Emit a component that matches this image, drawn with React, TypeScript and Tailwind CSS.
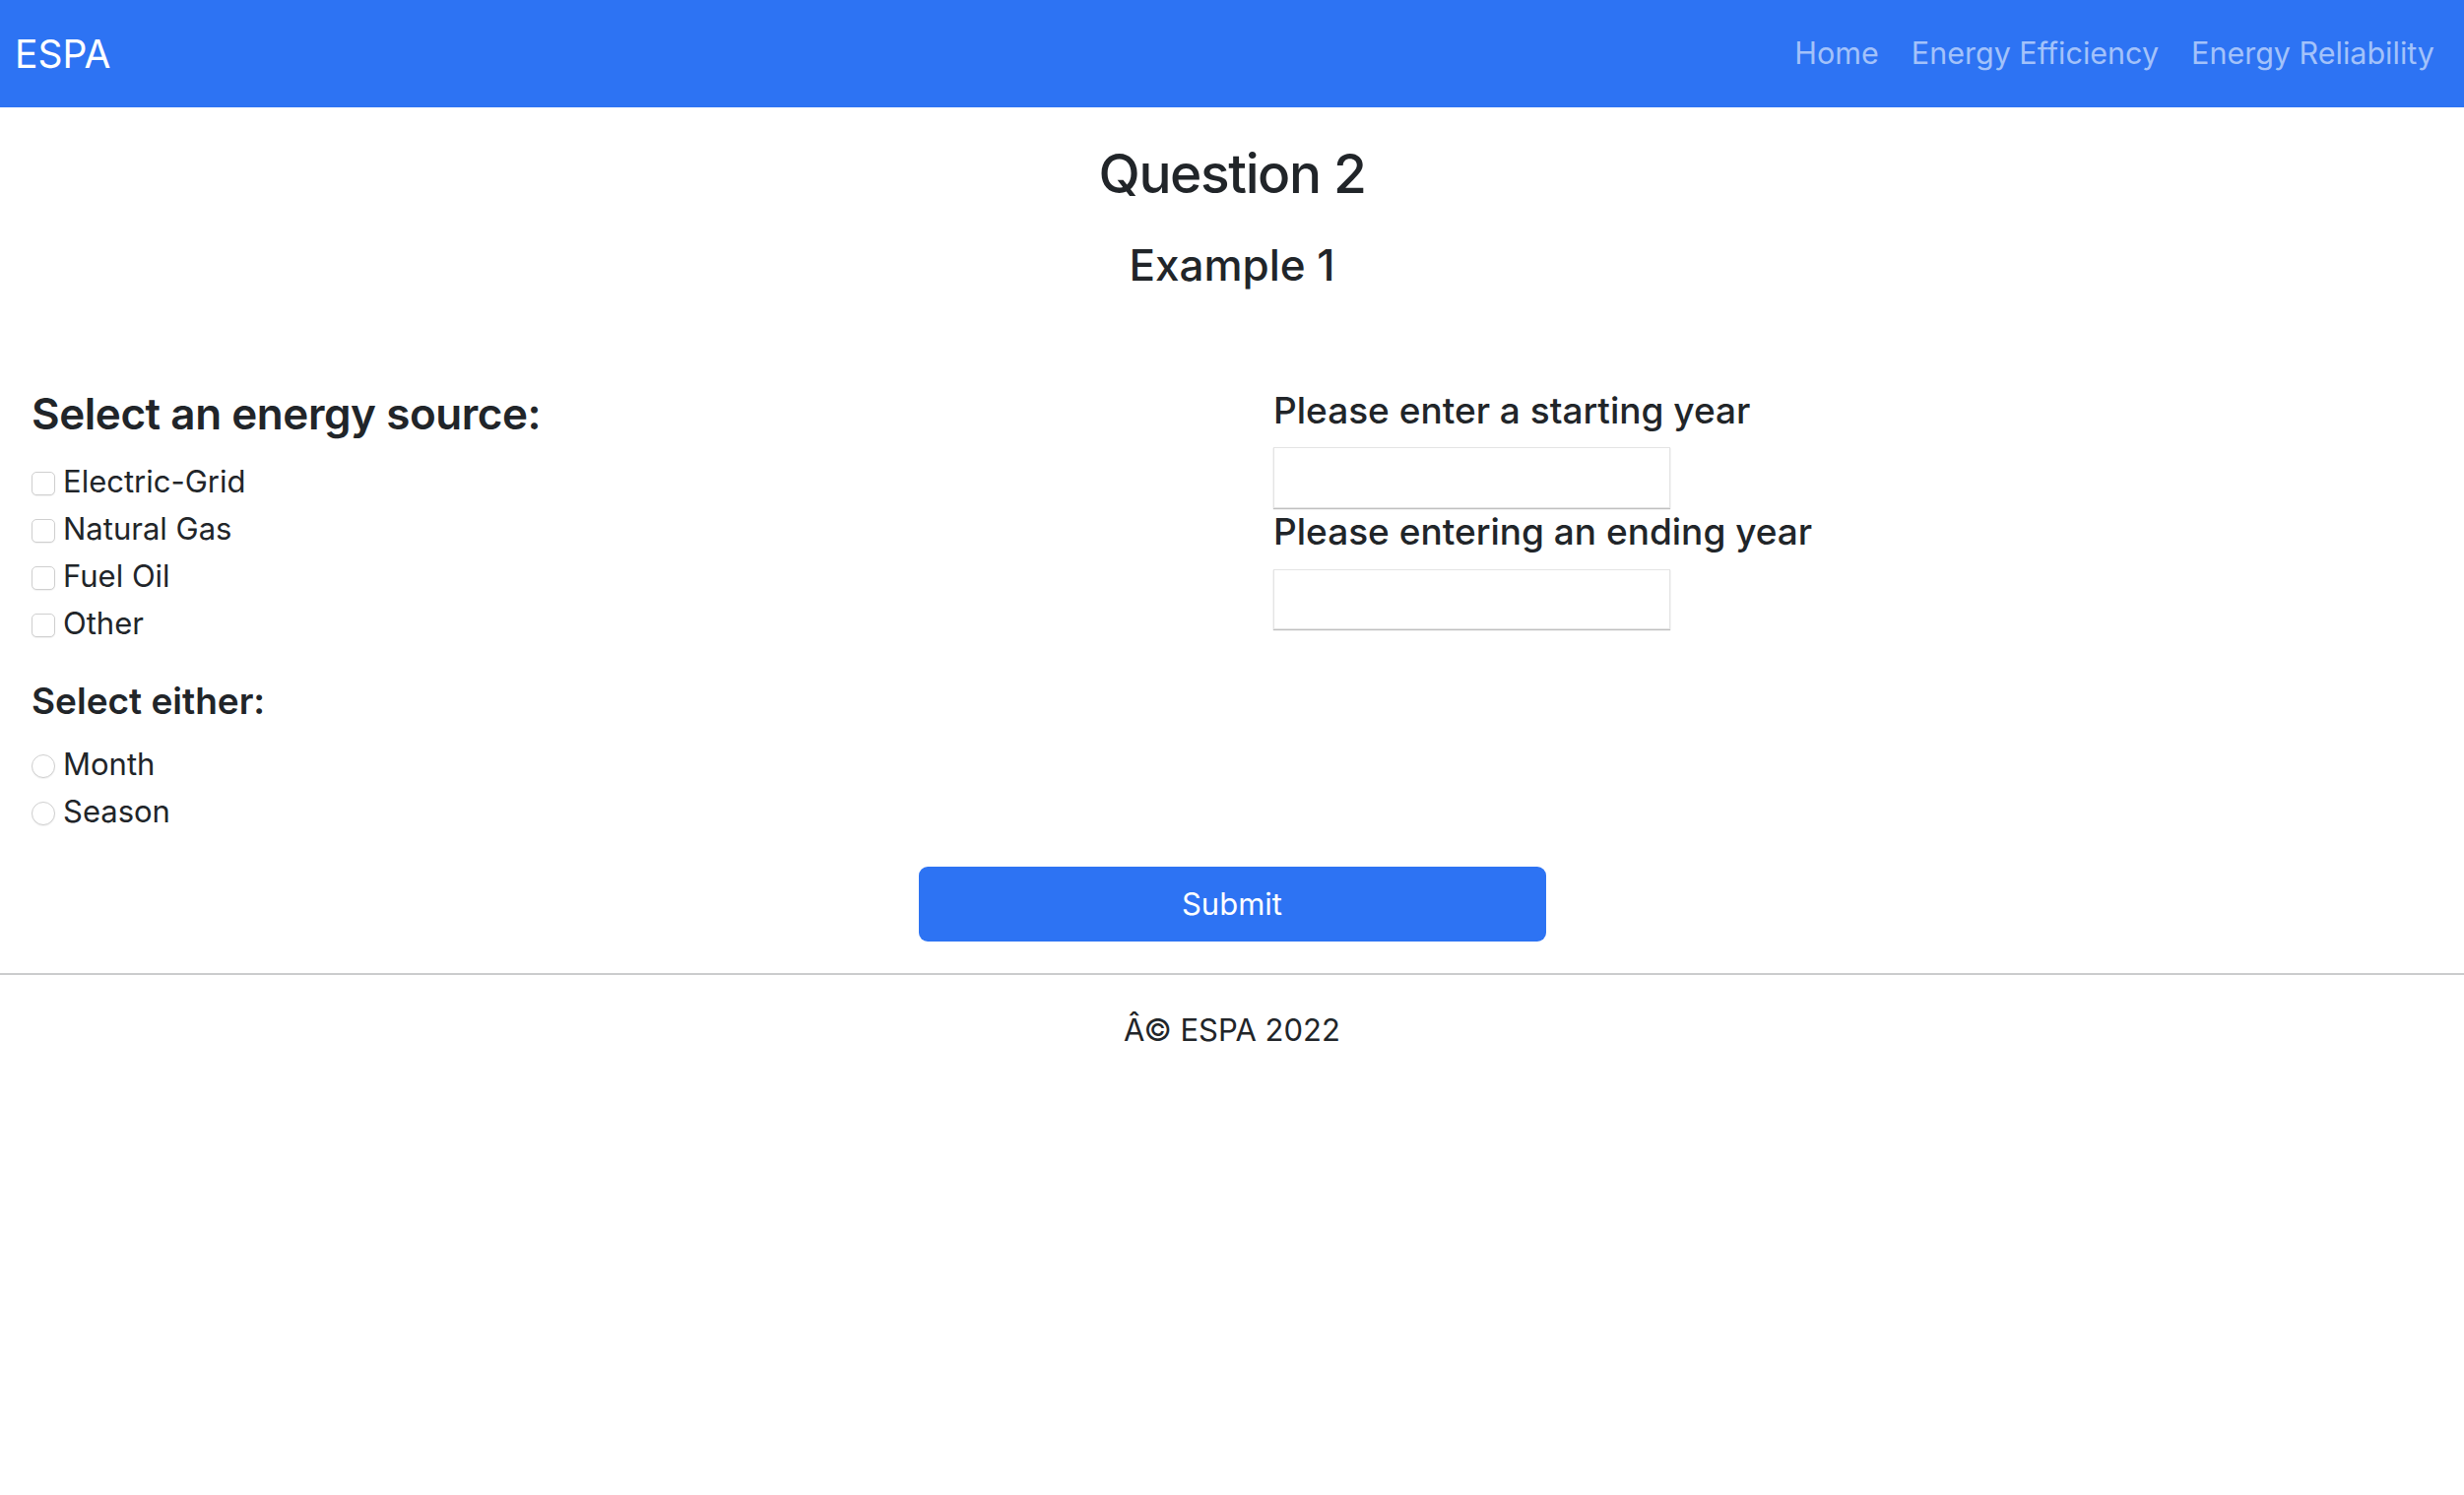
import { useState } from "react"

const sources = ["Electric-Grid", "Natural Gas", "Fuel Oil", "Other"]
const periods = ["Month", "Season"]

function Navbar() {
  return (
    <nav className="h-[109px] bg-[#2d73f3] flex items-center justify-between pl-[15px] pr-[30px]">
      <a href="#" className="text-[39px] leading-none text-white">
        ESPA
      </a>
      <div className="flex items-center gap-[33px] text-[30.5px] leading-none text-[#a3c2fa]">
        <a href="#">Home</a>
        <a href="#">Energy Efficiency</a>
        <a href="#">Energy Reliability</a>
      </div>
    </nav>
  )
}

function Checkbox({ label }: { label: string }) {
  const [checked, setChecked] = useState(false)
  return (
    <label className="flex items-center gap-[8px] h-[48px] text-[31px]">
      <span
        onClick={() => setChecked(!checked)}
        className="mt-[4px] w-[24px] h-[24px] rounded-[5px] border border-[#cfcfcf] bg-white shadow-[0_1px_1px_rgba(0,0,0,0.06)]"
      />
      {label}
    </label>
  )
}

function Radio({ label }: { label: string }) {
  return (
    <label className="flex items-center gap-[8px] h-[48px] text-[31px]">
      <span className="mt-[4px] w-[24px] h-[24px] rounded-full border border-[#cfcfcf] bg-white shadow-[0_1px_1px_rgba(0,0,0,0.06)]" />
      {label}
    </label>
  )
}

export default function App() {
  return (
    <div className="min-h-screen bg-white text-[#212529] font-['Inter',sans-serif]">
      <Navbar />

      <main>
        <h2 className="mt-[29px] text-center text-[55px] leading-[77px] font-medium tracking-[-0.025em]">
          Question 2
        </h2>
        <h4 className="mt-[25px] text-center text-[44px] leading-[58px] font-medium">Example 1</h4>

        <div className="mt-[93px] grid grid-cols-2">
          <div className="pl-8">
            <h4 className="text-[44px] leading-[58px] font-semibold tracking-[-0.01em] mb-4">
              Select an energy source:
            </h4>
            {sources.map((s) => (
              <Checkbox key={s} label={s} />
            ))}

            <h5 className="mt-[31px] mb-4 text-[37px] leading-[48px] font-semibold">Select either:</h5>
            {periods.map((p) => (
              <Radio key={p} label={p} />
            ))}
          </div>

          <div className="pl-[42px] mt-[2px]">
            <h5 className="text-[37px] leading-[48px] font-medium mb-[13px]">Please enter a starting year</h5>
            <input className="block w-[403px] h-[62px] border border-[#e4e4e4] shadow-[0_1px_1px_rgba(0,0,0,0.25)] outline-none" />
            <h5 className="text-[37px] leading-[48px] font-medium mb-[14px]">Please entering an ending year</h5>
            <input className="block w-[403px] h-[61px] border border-[#e4e4e4] shadow-[0_1px_1px_rgba(0,0,0,0.25)] outline-none" />
          </div>
        </div>

        <div className="mt-[32px] flex justify-center">
          <button className="w-[637px] h-[76px] rounded-[9px] bg-[#2d73f3] text-white text-[31px]">Submit</button>
        </div>
      </main>

      <hr className="mt-[32px] border-0 h-[2px] bg-[#cbcccd]" />
      <footer className="mt-[32px] text-center text-[31px] leading-[48px]">Â© ESPA 2022</footer>
    </div>
  )
}
